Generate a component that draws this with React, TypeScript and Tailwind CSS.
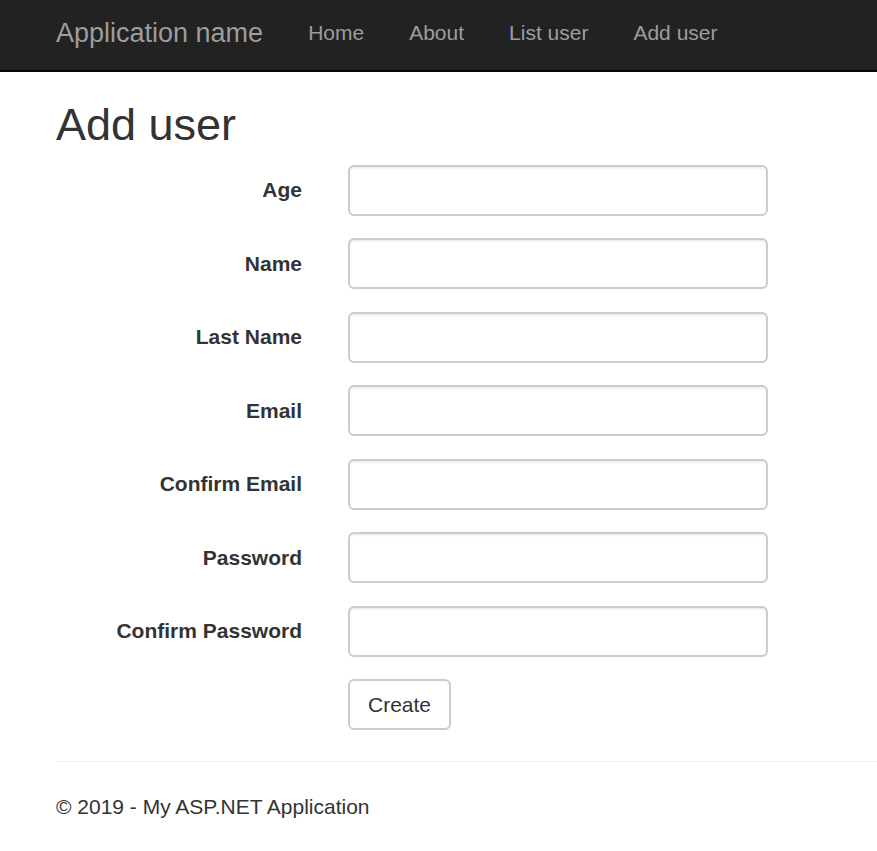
import React from "react";

const fields = ["Age", "Name", "Last Name", "Email", "Confirm Email", "Password", "Confirm Password"];

export default function App() {
  return (
    <div className="min-h-screen bg-white text-[#333] font-['Liberation_Sans',Arial,Helvetica,sans-serif] overflow-hidden">
      <nav className="h-[72px] bg-[#222] border-b-2 border-[#080808] flex items-center pl-[33.5px] pb-[4px]">
        <a className="px-[22.5px] text-[27px] leading-[30px] text-[#9d9d9d] cursor-pointer">Application name</a>
        <ul className="flex">
          {["Home", "About", "List user", "Add user"].map((l) => (
            <li key={l}>
              <a className="block px-[22.5px] text-[21px] leading-[30px] text-[#9d9d9d] cursor-pointer">{l}</a>
            </li>
          ))}
        </ul>
      </nav>
      <div className="pl-[56px]">
        <h2 className="text-[45px] leading-[49.5px] font-normal mt-[28px] mb-[15px]">Add user</h2>
        <div className="flex flex-col gap-[22.5px]">
          {fields.map((f) => (
            <div key={f} className="flex items-center">
              <label className="w-[246px] text-right font-bold text-[21px] leading-[30px]">{f}</label>
              <input
                type="text"
                className="ml-[46px] w-[420px] h-[51px] border-2 border-[#ccc] rounded-[6px] shadow-[inset_0_1.5px_1.5px_rgba(0,0,0,0.075)] px-[18px] text-[21px] outline-none"
              />
            </div>
          ))}
          <div className="flex">
            <button className="ml-[292px] bg-white border-2 border-[#ccc] rounded-[6px] px-[18px] py-[8.5px] text-[21px] leading-[30px] text-[#333]">
              Create
            </button>
          </div>
        </div>
        <hr className="mt-[31px] border-0 border-t-[1.5px] border-[#eee]" />
        <footer>
          <p className="mt-[30px] text-[21px] leading-[30px]">© 2019 - My ASP.NET Application</p>
        </footer>
      </div>
    </div>
  );
}
